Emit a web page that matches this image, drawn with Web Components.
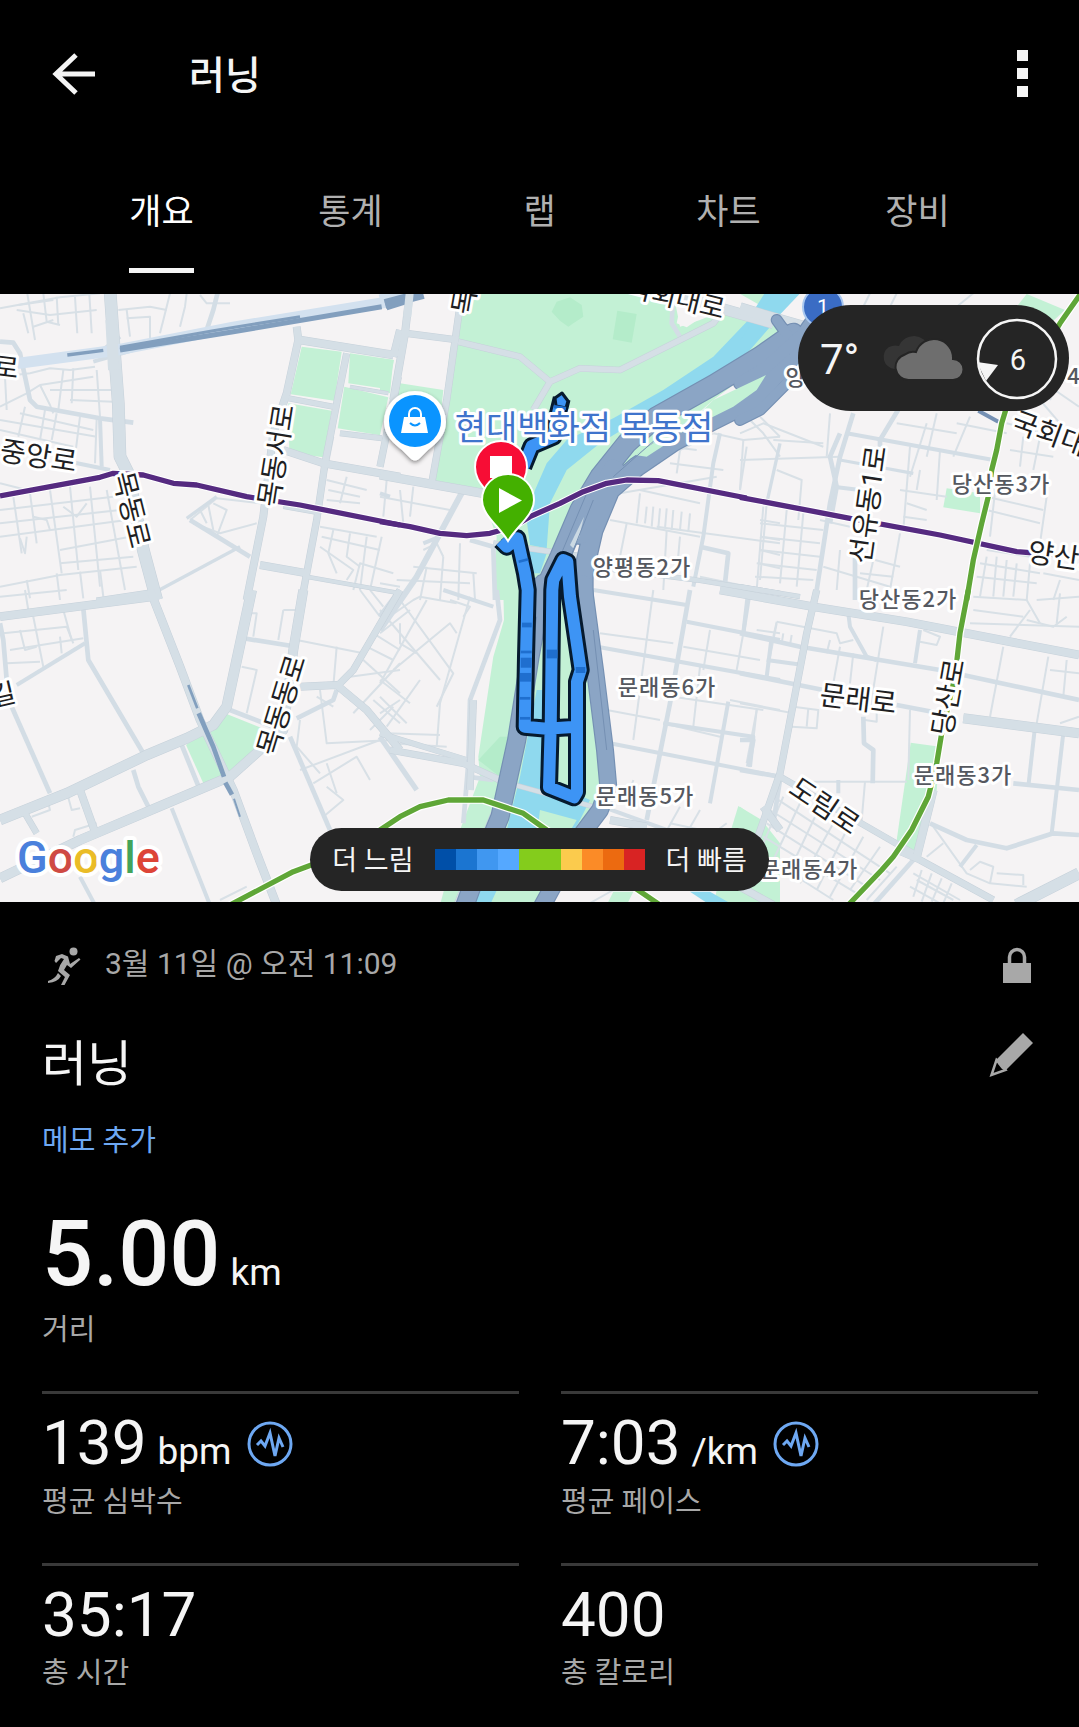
<!DOCTYPE html>
<html lang="ko">
<head>
<meta charset="utf-8">
<meta name="viewport" content="width=device-width, initial-scale=1">
<title>러닝</title>
<style>
  body { margin: 0; background: #000; color: #f5f5f5; font-family: Roboto, "Noto Sans CJK KR", sans-serif; }
</style>
</head>
<body>
<activity-page>
  <app-bar heading="러닝"></app-bar>
  <tab-strip labels="개요,통계,랩,차트,장비"></tab-strip>
  <route-map>
    <weather-pill slot="weather"></weather-pill>
    <pace-legend slot="legend"></pace-legend>
  </route-map>
  <activity-summary></activity-summary>
  <stat-grid>
    <stat-card value="139" unit="bpm" label="평균 심박수" zone></stat-card>
    <stat-card value="7:03" unit="/km" label="평균 페이스" zone></stat-card>
    <stat-card value="35:17" label="총 시간"></stat-card>
    <stat-card value="400" label="총 칼로리"></stat-card>
  </stat-grid>
</activity-page>

<script>
class Base extends HTMLElement {
  connectedCallback() {
    if (!this.shadowRoot) this.attachShadow({ mode: 'open' }).innerHTML = this.view();
  }
}

customElements.define('activity-page', class extends Base {
  view() { return `<style>:host{display:block;min-height:100vh;background:#000}main{display:flex;flex-direction:column}</style><main><slot></slot></main>`; }
});

customElements.define('app-bar', class extends Base {
  view() { return `<style>
    :host{display:block}
    header{display:flex;align-items:center;height:148px;padding:0 42px}
    button{display:flex;align-items:center;justify-content:center;width:64px;height:64px;margin:0;padding:0;border:0;background:none;color:inherit}
    h1{flex:1;margin:0 0 0 83px;padding-top:4px;font-size:39px;line-height:56px;font-weight:500}
    .more{width:30px}
  </style>
  <header>
    <button aria-label="뒤로"><svg width="64" height="64" viewBox="0 0 64 64" fill="none" stroke="#f5f5f5" stroke-width="5"><path d="M53 32H14M34 13 14 32 34 51"/></svg></button>
    <h1>${this.getAttribute('heading')}</h1>
    <button class="more" aria-label="더보기"><svg width="30" height="64" viewBox="0 0 30 64" fill="#f5f5f5"><path d="M10 8h11v11H10zM10 26h11v11H10zM10 44h11v11H10z"/></svg></button>
  </header>`; }
});

customElements.define('tab-strip', class extends Base {
  view() {
    const tabs = this.getAttribute('labels').split(',').map((t, i) => `<button role="tab" aria-selected="${i === 0}"><span>${t}</span></button>`).join('');
    return `<style>
    :host{display:block}
    nav{display:flex;height:146px;padding:0 67px;box-sizing:border-box}
    button{flex:1;display:flex;justify-content:center;align-items:flex-start;margin:0;padding:0;border:0;background:none;color:#b0b0b0;font:inherit;font-size:35px}
    span{display:flex;align-items:center;height:125px;box-sizing:border-box;border-bottom:5px solid transparent}
    [aria-selected=true]{color:#fff}
    [aria-selected=true] span{border-color:#f5f5f5}
  </style><nav role="tablist">${tabs}</nav>`;
  }
});

/* Map geometry: six tiles at 3 units per pixel. Each row is: tile, stroke width, points. */
const TILES = { A: [0, 290], B: [380, 290], C: [740, 290], D: [0, 590], E: [380, 590], F: [740, 590] };
const place = (t, p) => p.trim().split(/\s+/).map(q => {
  const [x, y] = q.split(',').map(Number);
  return `${(TILES[t][0] + x / 3).toFixed(1)},${(TILES[t][1] + y / 3).toFixed(1)}`;
}).join(' ');
const rows = s => s.trim().split('\n').map(l => l.trim().match(/^(\S)\s+(\S+)\s+(.*)$/));
const lines = (color, s, cap = 'butt') => `<g fill="none" stroke="${color}" stroke-linejoin="round" stroke-linecap="${cap}">` +
  rows(s).map(([, t, w, p]) => `<polyline stroke-width="${(w / 3).toFixed(1)}" points="${place(t, p)}"/>`).join('') + '</g>';
const areas = s => rows(s).map(([, t, c, p]) => `<polygon fill="${c}" points="${place(t, p)}"/>`).join('');

const PARKS = `
A #c3f1d5 905,170 1025,185 1003,332 872,313
A #c3f1d5 1050,190 1182,210 1165,298 1045,280
A #c3f1d5 1033,290 1165,322 1140,436 1013,415
A #c3f1d5 865,340 995,362 970,502 868,488
D #c3f1d5 558,465 680,372 800,420 800,470 700,540 612,584
B #c3f1d5 0,205 40,210 30,310 0,300
B #c3f1d5 60,280 190,300 185,350 50,330
B #c3f1d5 250,10 880,10 900,110 960,90 1010,70 1200,110 1200,180 1000,330 760,540 600,700 520,800 500,930 340,930 350,740 300,600 165,580 210,180
B #b4ecca 515,65 530,35 570,22 605,45 610,80 580,100 565,110 540,92
B #b4ecca 712,62 770,72 755,158 698,148
B #c3f1d5 1060,0 1200,0 1200,80
E #c3f1d5 370,0 640,0 700,560 620,700 460,945 180,945 240,720 300,560 295,500 340,200 372,90
E #b4ecca 295,510 360,440 400,440 360,560
E #c3f1d5 1075,648 1145,690 1200,760 1200,945 1000,945 1050,730
E #c3f1d5 700,905 760,905 740,945 680,945
C #c3f1d5 860,12 975,60 920,110 830,50
C #c3f1d5 620,595 720,610 720,670 610,652
F #c3f1d5 512,458 600,470 590,600 520,790 470,750
F #c3f1d5 0,650 55,690 20,740 0,740
B #f5f3f4 900,50 975,60 960,85 920,112 890,100
`;
const WATER = `
B #8fd9ee 1160,0 1100,95 1000,200 850,300 700,385 560,450 500,520 465,600 440,690 450,765 500,775 510,640 560,540 660,460 840,350 1010,260 1110,180 1180,100 1200,50 1200,0
B #8fd9ee 440,780 500,790 480,850 440,850
E #8fd9ee 470,300 500,300 480,560 630,630 600,690 560,760 360,880 330,945 270,945 380,720 420,560
E #c3f1d5 480,660 590,690 560,740 470,740
E #8fd9ee 930,905 990,905 1060,945 990,945
C #8fd9ee 110,0 190,0 0,200 0,150
`;
const MINOR = `
A 6 80,0 95,90 105,150
A 6 0,55 180,22 300,10
A 6 55,45 160,30
A 6 130,10 140,95 180,105
A 6 170,20 175,105
A 6 225,20 232,130
A 6 268,10 275,130
A 6 50,60 150,75 290,60
A 6 100,110 160,90
A 6 70,70 85,130
A 6 355,60 450,50 500,60
A 6 380,85 450,80 450,150
A 6 510,10 480,130
A 6 560,10 555,50 540,110
A 6 600,15 620,40 690,40
A 6 380,60 390,140
A 6 0,260 90,250 150,235 210,240 285,230
A 6 0,350 80,310 120,285 280,260
A 6 120,285 150,345 160,370
A 6 190,240 175,360
A 6 290,240 300,380
A 6 220,235 215,340
A 6 150,300 340,300
A 6 210,330 340,335
A 6 15,260 20,360
A 6 60,370 280,420
A 6 0,390 290,440
A 6 75,350 55,440
A 6 135,360 120,450
A 6 170,370 155,450
A 6 240,380 225,500
A 6 290,385 285,520
A 6 0,420 220,470
A 6 0,580 80,600
A 6 40,620 65,790
A 6 90,610 110,760
A 6 150,600 185,850
A 6 210,590 235,840
A 6 270,590 300,890
A 6 320,600 375,900
A 6 0,660 340,620
A 6 0,700 360,660
A 6 0,740 380,690
A 6 180,780 390,740
A 6 180,820 400,800
A 6 60,745 75,790 80,740
A 6 100,680 140,690 150,720
A 6 190,650 230,680 260,640
A 6 0,890 180,855 410,830
A 6 80,870 90,925
A 6 170,850 180,930
A 6 240,845 250,925
A 6 300,840 310,920
A 6 640,640 680,660 650,740
A 6 600,660 620,700
A 6 625,645 640,720
A 6 570,690 650,625 780,640
A 6 580,700 660,730 770,700
A 6 1000,440 980,540
A 6 980,570 1100,600
A 6 985,600 1080,620
A 6 980,630 1080,640
A 6 1040,560 1020,640
A 6 960,710 1130,740
A 6 965,740 1140,780
A 6 1000,720 985,790 1010,850
A 6 1050,730 1040,800 1080,830
A 6 1100,740 1080,900
A 6 1145,740 1110,900
A 6 960,770 1060,840 1040,870
A 6 1060,900 1080,820 1180,850
B 6 0,620 210,660
B 6 20,570 10,680
B 6 70,700 60,600
B 6 100,590 90,680
B 6 130,780 170,760 190,800
B 6 100,830 290,850
B 6 50,870 270,880
B 6 140,830 120,930
B 6 190,800 180,930
B 6 240,760 235,930
B 6 280,850 285,930
B 6 0,880 60,890
B 6 780,460 950,480
B 6 1000,430 1090,450 1200,440
B 6 1100,380 1150,430 1200,500
B 6 1000,430 900,480 890,550
B 6 1090,450 1080,600
B 6 780,600 960,640
B 6 720,610 1010,560
B 6 870,520 1030,540
B 6 690,690 960,740
B 6 780,610 770,700
B 6 800,650 795,700
B 6 820,650 815,710
B 6 840,655 835,715
B 6 860,655 855,715
B 6 880,660 875,720
B 6 905,665 900,720
B 6 930,670 925,725
B 6 830,710 1200,760
B 6 740,700 720,800
B 6 860,720 850,900
B 6 1150,650 1130,900
B 6 1140,690 1200,700
B 6 1140,740 1200,750
B 6 1140,780 1200,795
B 6 1135,820 1200,835
B 6 960,860 1200,910
B 6 900,740 890,850
C 6 0,430 70,400 250,470
C 6 60,380 120,440
C 6 270,370 260,500
C 6 0,510 300,500
C 6 100,450 250,460
C 6 20,470 0,600
C 6 110,540 185,570 175,690
C 6 290,550 280,640
C 6 240,690 330,710
C 6 60,700 250,720
C 6 60,740 240,760
C 6 60,780 240,800
C 6 50,820 230,840
C 6 45,860 220,870
C 6 80,640 60,870
C 6 140,660 120,880
C 6 190,670 170,890
C 6 370,800 480,830
C 6 360,850 460,860
C 6 250,830 450,890
C 6 300,780 290,900
C 6 400,810 380,900
C 6 480,730 450,900
C 6 510,470 490,720
C 6 560,400 510,560
C 6 590,370 560,500
C 6 650,400 800,430
C 6 470,400 650,430
C 6 600,480 590,630
C 6 690,380 640,500
C 6 480,600 620,620
C 6 500,640 560,660
C 6 490,680 560,690
C 6 540,540 530,600
C 6 800,400 950,440
C 6 810,480 940,500
C 6 850,440 840,530
C 6 900,440 880,540
C 6 740,620 910,660
C 6 740,660 900,700
C 6 770,560 750,740
C 6 920,620 900,760
C 6 740,780 870,800
C 6 720,820 900,850
C 6 710,860 890,880
C 6 740,800 720,920
C 6 770,800 760,920
C 6 800,810 790,920
C 6 830,820 820,920
C 6 870,820 860,930
C 6 910,850 1017,870
C 6 960,870 940,930
C 6 930,290 1017,350
C 6 900,330 960,400
C 6 980,210 930,330
C 6 390,10 370,50
C 6 470,10 450,50
C 6 700,10 650,50
D 6 0,20 200,0
D 6 75,0 85,60
D 6 10,130 200,110 220,160
D 6 100,80 130,230
D 6 190,60 215,150
D 6 30,180 250,145
D 6 20,220 120,215
D 6 60,120 75,180 110,170
D 6 180,140 185,190
D 6 200,605 215,660 240,655
D 6 95,680 150,660 140,620
D 6 220,740 225,720 290,700
D 6 750,70 770,70 760,140
D 6 850,60 890,60
D 6 850,60 835,150
D 6 725,230 770,240 740,370
D 6 890,150 1090,190
D 6 1010,170 1000,290
D 6 1080,0 1140,80
D 6 1110,0 1150,50
D 6 1120,130 1200,180
D 6 1100,170 1180,210
D 6 1090,210 1200,310
D 6 1050,260 1200,240
D 6 1200,220 1060,370
D 6 1180,350 1110,420
D 6 1120,330 1200,400
D 6 960,300 980,460 1180,450
D 6 950,320 1000,350
D 6 900,390 890,470 960,550
D 6 900,540 1140,450
D 6 940,580 1070,500 1110,570
D 6 980,590 1030,630 970,680
D 6 980,520 1010,610
D 6 660,930 740,890
E 6 0,100 100,30 120,20 230,40
E 6 60,30 220,250 170,350
E 6 210,30 270,50 250,80
E 6 0,130 90,60
E 6 0,60 180,270
E 6 40,240 210,100 230,130
E 6 110,190 60,160 60,100
E 6 140,30 0,280
E 6 270,20 180,340 170,470
E 6 0,270 90,340
E 6 0,320 80,400
E 6 20,430 180,435
E 6 30,460 200,470
E 6 0,370 60,330
E 6 120,270 20,410
E 6 820,0 760,450
E 6 660,130 880,160
E 6 990,120 970,240
E 6 1090,130 1070,240
E 6 910,170 1140,210
E 6 1190,100 1160,250
E 6 680,360 840,390
E 6 960,230 940,410
E 6 880,320 1150,360
E 6 850,400 1020,440
E 6 1130,360 1100,520
E 6 1050,330 1200,360
E 6 900,650 850,740
E 6 960,660 920,730
E 6 1040,700 960,760
E 6 870,700 1060,740
E 6 620,945 700,900
E 6 760,570 740,640
E 6 1130,120 1200,130
F 6 110,95 290,130 300,160 340,150
F 6 110,95 100,140
F 6 130,130 125,160
F 6 155,135 150,165
F 6 270,150 260,190
F 6 300,170 280,280
F 6 430,110 390,360
F 6 550,120 600,140 590,165 540,155
F 6 340,190 330,280
F 6 160,350 235,360 230,415 155,410
F 6 205,355 200,410
F 6 375,390 410,395 410,350
F 6 510,360 505,570
F 6 0,340 160,370
F 6 50,360 40,450
F 6 790,170 750,380
F 6 925,200 890,400
F 6 930,240 1017,250
F 6 980,210 970,320
F 6 700,20 860,30 900,100
F 6 700,60 850,80
F 6 870,60 810,140
F 6 690,100 1017,110
F 6 890,30 1017,20
F 6 960,10 950,100
F 6 860,90 940,110 980,80
F 6 960,400 1017,380
F 6 220,575 500,575
F 6 375,575 365,690
F 6 130,620 70,760
F 6 180,640 100,810
F 6 230,670 140,860
F 6 280,700 180,880
F 6 320,720 230,900
F 6 370,740 270,920
F 6 420,770 330,900
F 6 100,620 450,850
F 6 90,660 420,870
F 6 80,700 380,890
F 6 70,740 350,910
F 6 60,790 280,930
F 6 470,830 380,930
F 6 580,710 680,850 750,880 860,890
F 6 610,760 560,800
F 6 690,840 720,815 760,830 750,880
F 6 770,850 850,855 850,885
F 6 520,850 660,930
F 6 545,840 520,920
F 6 575,850 545,935
F 6 605,865 575,935
F 6 635,880 610,940
F 6 530,870 640,930
F 6 510,890 600,940
`;
const MID = `
A 14 0,155 40,158 60,190 90,330 110,350 300,385 400,398
A 12 300,385 305,530
A 12 210,515 330,540
A 14 655,0 640,60 620,120
A 10 440,920 720,770
A 14 570,690 750,800
A 10 560,685 650,620
A 12 295,190 360,140
A 12 280,215 400,180
B 12 0,610 30,620
B 18 250,600 110,860 0,1020
B 14 270,750 340,770 345,930
B 12 130,760 180,740
B 12 1020,430 1000,520 970,740 940,890
B 14 960,770 1045,790 1035,880
B 14 880,0 875,100 900,140
C 14 300,430 270,500 290,590 270,700
C 14 340,370 300,500 270,640 230,900
C 14 480,350 420,450 420,520
C 12 320,430 760,510
C 10 300,510 520,550
C 10 120,460 80,640
C 12 280,590 360,600
C 14 345,800 345,930
D 14 0,100 10,150 20,270
D 14 35,350 150,610
D 14 250,55 265,210 430,490
D 12 255,160 50,285
D 14 400,540 415,590 450,660
D 14 545,465 600,600
D 12 515,655 630,945
D 12 240,860 285,945
D 14 870,440 990,720
D 14 890,385 1000,330 1010,300
D 14 730,145 890,170
D 14 870,390 820,410 690,360
E 16 60,0 0,80
E 14 350,0 360,90 270,330 265,520 250,700
E 16 0,440 110,600
E 12 190,0 340,50
E 12 660,172 1200,270
E 12 690,460 1200,560
E 14 930,0 870,340 800,690
E 12 1110,0 1090,130
E 12 920,95 1200,150
E 12 1045,335 990,640
E 14 1200,570 1180,700
E 12 640,640 860,720
E 12 640,0 920,45
E 12 850,400 1120,440 1110,530
E 14 340,570 260,560
F 12 25,0 10,130
F 12 95,140 80,260
F 12 80,210 190,225
F 14 0,130 180,170 600,240 1017,330
F 14 0,250 250,300
F 14 470,345 600,370
F 12 540,120 525,220
F 12 325,70 330,110 380,200 410,210
F 14 0,540 120,560
F 14 0,450 40,450 25,530
F 14 370,380 372,460 400,480 398,580
F 12 295,570 295,610
F 12 885,410 865,590
F 12 970,430 935,730
F 14 820,580 1017,600
F 14 570,700 680,750 800,775 940,730 1017,735
F 12 710,765 660,830
F 14 520,810 400,945
`;
const MAJOR = `
A 38 330,0 340,140 355,340 360,500 385,550 430,780 470,930
A 24 890,110 895,150 860,310 820,430 790,680 740,930
A 26 900,150 1180,195
A 24 1180,200 1200,120
A 22 1040,190 1010,340 975,520 950,690 905,930
A 18 865,325 1000,350
A 18 1020,430 1145,445
A 24 850,480 970,520 1200,560
A 22 1195,260 1140,530
A 12 1050,290 1165,310
A 24 780,825 920,850
A 14 920,860 1200,910
A 14 850,650 960,670
A 26 290,935 460,910
B 24 90,0 75,130 40,330
B 22 245,10 200,330 155,580
B 22 80,130 235,150
B 20 0,190 60,190
B 20 235,155 420,200 510,275
B 20 460,360 510,275 600,235 720,240 900,150 1000,100 1030,60
B 28 0,555 310,610
B 18 340,760 620,800
B 16 1200,910 950,870 630,830
B 34 900,20 1180,100
C 36 0,55 100,85 190,110
C 16 0,890 180,920
D 26 0,80 460,20
D 26 450,0 540,230 600,390 700,600 770,790 830,945
D 32 0,690 200,610 440,495 560,445 640,405 680,350 755,0
D 30 0,865 240,750 500,640 690,560 780,480 850,420 880,180 910,0
D 24 900,290 1010,285 1100,360 1200,480
D 22 1010,290 1060,240 1200,0
D 24 240,600 290,740
D 20 75,670 110,730
E 22 30,480 250,520 360,570
E 18 0,430 260,510
E 16 350,570 640,650
E 20 370,600 230,945
E 24 690,690 800,710
E 24 1150,650 1200,720
E 22 280,330 270,600
F 26 -60,0 220,50 500,95 1017,195
F 22 230,0 200,130 120,550 40,780
F 30 670,385 1017,430
F 20 120,560 520,790
F 26 580,600 530,800
F 22 470,780 540,810 760,930
F 36 830,945 1017,850
F 24 0,890 100,945
`;
const HIGHWAY = `
B 64 1240,130 1140,200 1000,285 830,380 740,460 660,560 600,660 540,800 480,930
B 30 1220,120 1205,110
B 62 1260,190 1180,260 1120,330 1000,390 880,455 770,530 690,600 640,720 610,850 610,930
B 70 700,540 640,680 600,730
E 58 490,-20 450,200 410,450 360,680 290,850 250,960
E 54 610,-20 645,240 675,480 685,590 660,660 600,740 480,960
C 36 110,90 160,160 170,250 60,360 0,390
C 42 280,0 190,130 80,230 0,280
`;

customElements.define('route-map', class extends Base {
  view() {
    const label = (x, y, r, s, t, c = '#1f1f23', extra = '') => `<text transform="translate(${x} ${y}) rotate(${r})" text-anchor="middle" font-size="${s}" fill="${c}" ${extra}>${t}</text>`;
    const gray = (x, y, t) => label(x, y, 0, 22, t, '#55585f', 'class="area"');
    const loop = `M${place('B', '362,752')} ${place('B', '380,770')} ${place('B', '412,745')} ${place('B', '435,850')} ${place('E', '443,0')} ${place('E', '438,200')} ${place('E', '434,410')} ${place('E', '500,416')} ${place('E', '588,410')}
      M${place('E', '512,410')} ${place('E', '507,592')} ${place('E', '582,622')} ${place('E', '591,606')} ${place('E', '591,275')} ${place('E', '602,240')} ${place('E', '570,20')} ${place('B', '562,815')} ${place('B', '550,810')} ${place('B', '520,870')} ${place('E', '517,0')} ${place('E', '512,420')}
      M${place('B', '545,325')} ${place('B', '534,370')} ${place('B', '520,440')} ${place('B', '455,468')} ${place('B', '430,530')}`;
    return `<style>
    :host{display:block;position:relative;overflow:hidden;background:#f5f3f4}
    .map{display:block;width:100%;height:auto;font-family:Roboto,"Noto Sans CJK KR",sans-serif}
    text{paint-order:stroke;stroke:#fff;stroke-width:6px;stroke-linejoin:round;font-weight:400}
    .area{font-family:"Noto Sans CJK KR",sans-serif;font-weight:500;letter-spacing:1px}
    slot[name=weather]{display:block;position:absolute;top:11px;right:10px}
    slot[name=legend]{display:flex;justify-content:center;position:absolute;left:0;right:0;bottom:11px}
  </style>
  <svg class="map" viewBox="0 294 1079 608" role="img" aria-label="경로 지도">
    <rect y="294" width="1079" height="608" fill="#f5f3f4"/>
    ${areas(PARKS)}${areas(WATER)}
    ${lines('#d8e0e6', MINOR)}
    ${lines('#d3dde5', MID)}
    ${lines('#c6d1da', MAJOR)}
    ${lines('#d5dfe6', MAJOR.replace(/^(\S) (\d+)/gm, (m, t, w) => t + ' ' + (w - 3)))}
    ${lines('#d3e1ef', `
A 34 40,222 340,182 700,112 1200,30
B 34 0,30 110,5`)}
    ${lines('#829fbe', `
A 10 202,195 310,181
A 15 360,180 700,125 1145,50
A 9 360,172 640,122 900,80
A 26 1158,48 1215,30
B 30 15,42 130,12
D 8 565,285 592,355
D 14 596,370 640,470 672,560
D 14 676,578 696,614
D 6 702,626 720,680`)}
    ${lines('#d5dfe6', `
A 34 333,90 341,240
B 24 90,0 82,80`)}
    ${lines('#7590b3', HIGHWAY, 'round')}
    ${lines('#8ba5c5', HIGHWAY.replace(/^(\S) (\d+)/gm, (m, t, w) => t + ' ' + (w - 7)), 'round')}
    ${areas(`
B #c3f1d5 1000,330 1158,255 1130,300 1060,350 900,430
B #c3f1d5 765,495 850,440 900,435 800,500
B #cbd9e3 612,680 598,740 580,775 570,765`)}
    ${lines('#7590b3', `
B 3 640,630 560,830
B 3 620,610 540,800
B 3 870,410 700,560
E 3 470,80 420,420
E 3 640,120 680,480
C 12 715,362 775,395`)}
    ${lines('#fff', `
A 22 0,618 300,562 340,550 430,555 520,580 590,585 740,620 900,645 1200,705
B 22 0,695 90,710 180,730 260,737 330,730 400,710 450,680 540,640 610,605 680,580 740,570 835,572 1100,624
C 22 0,622 330,685 600,735 830,785 900,788`)}
    ${lines('#552a80', `
A 16 0,618 300,562 340,550 430,555 520,580 590,585 740,620 900,645 1200,705
B 16 0,695 90,710 180,730 260,737 330,730 400,710 450,680 540,640 610,605 680,580 740,570 835,572 1100,624
C 16 0,622 330,685 600,735 830,785 960,795`)}
    ${['#fff 23', '#5fa637 16'].map(s => { const [c, w] = s.split(' '); return lines(c, `
C ${w} 1030,0 960,100 900,200 800,350 785,400 770,480 755,540 745,620 725,700 700,810 680,930
F ${w} 685,0 660,130 645,260 605,430 590,520 565,620 515,720 460,800 425,840 325,945
D ${w} 690,945 880,845 1000,800 1140,720
E ${w} 0,720 60,680 120,650 205,630 310,630 430,670 500,720 700,850 840,945`); }).join('')}
    <g>
      ${label(474, 303, -80, 28, '목')}${label(674, 307, 14, 27, '국회대로')}
      ${label(5, 377, 7, 27, '로')}${label(37, 466, 9, 28, '중앙로')}
      ${label(122, 512, 76, 28, '목동로')}${label(286, 457, -81, 28, '목동서로')}
      ${label(291, 708, -73, 28, '목동동로')}${label(5, 704, -13, 27, '길')}
      ${label(878, 506, -82, 28, '선유동1로')}${label(857, 709, 7, 28, '문래로')}
      ${label(958, 699, -80, 28, '당산로')}${label(819, 814, 34, 28, '도림로')}
      ${label(1058, 447, 20, 28, '국회대로')}${label(1065, 567, 8, 28, '양산로')}
      ${gray(642, 575, '양평동2가')}${gray(1001, 492, '당산동3가')}${gray(908, 607, '당산동2가')}
      ${gray(667, 695, '문래동6가')}${gray(963, 783, '문래동3가')}${gray(645, 804, '문래동5가')}
      ${gray(809, 877, '문래동4가')}${gray(796, 385, '양')}${gray(1074, 384, '4')}
    </g>
    <circle cx="823" cy="307" r="20" fill="#3a6cc4" stroke="#a9c8f0" stroke-width="2"/>
    <text x="823" y="314" text-anchor="middle" font-size="21" fill="#fff" style="stroke:none">1</text>
    <path d="${loop}" fill="none" stroke="#061a2e" stroke-width="18" stroke-linejoin="round"/>
    <path d="${loop}" fill="none" stroke="#3d94f5" stroke-width="12" stroke-linejoin="round"/>
    <path d="M556 406 555 398 562 393 568 401 566 408z" fill="#3d94f5" stroke="#061a2e" stroke-width="3" stroke-linejoin="round"/>
    ${lines('#1f6fcf', `
E 14 426,105 455,105
E 8 422,186 455,186
E 30 422,218 455,218
E 26 420,262 453,262
E 8 418,325 451,325
E 26 500,192 532,192
E 8 420,385 450,385
E 18 587,240 616,240
B 8 416,815 445,808
B 10 522,350 558,355`)}
    ${label(584, 440, 0, 34, '현대백화점 목동점', '#3f74cc')}
    <filter id="sh" x="-30%" y="-30%" width="160%" height="160%"><feDropShadow dx="0" dy="2" stdDeviation="2" flood-opacity=".45"/></filter>
    <path filter="url(#sh)" d="M415 391a31 31 0 0 0-31 31c0 13 9 21 18 28l8 8q5 5 10 0l8-8c9-7 18-15 18-28a31 31 0 0 0-31-31z" fill="#fff"/>
    <circle cx="415" cy="421" r="26" fill="#0a94ff"/>
    <path d="M404 417h21l3 16h-27z" fill="#fff"/><path d="M409 418v-4a6 6 0 0 1 12 0v4" fill="none" stroke="#fff" stroke-width="2"/><path d="M410 423q5 5 10 0" fill="none" stroke="#0a94ff" stroke-width="2"/>
    <path d="M501 441a26 26 0 0 0-26 26c0 10 5 16 9 21h34c4-5 9-11 9-21a26 26 0 0 0-26-26z" fill="#f70d35" stroke="#fff" stroke-width="2"/><path d="M490 456h22v22h-22z" fill="#fff"/>
    <path d="M508 474a26 26 0 0 0-26 26c0 15 17 26 26 41 9-15 26-26 26-41a26 26 0 0 0-26-26z" fill="#44b000" stroke="#fff" stroke-width="2"/><path d="M499 488 522 500.500 499 513z" fill="#fff"/>
    <text x="17" y="873" font-size="45" style="font-weight:500;stroke-width:8px"><tspan fill="#4a80dc">G</tspan><tspan fill="#cf4a43">o</tspan><tspan fill="#eabc27">o</tspan><tspan fill="#4a80dc">g</tspan><tspan fill="#43a45a">l</tspan><tspan fill="#dd4437">e</tspan></text>
  </svg>
  <slot name="weather"></slot><slot name="legend"></slot>`;
  }
});

customElements.define('weather-pill', class extends Base {
  view() { return `<style>
    :host{display:flex;align-items:center;height:106px;padding:0 10px 0 22px;border-radius:53px;background:#252525}
    .temp{width:61px;padding-top:3px;font-size:42px;line-height:48px}
    .wind{display:flex;position:relative;width:84px;height:84px;margin-left:10px;align-items:center;justify-content:center;font-size:29px;line-height:32px}
    .wind svg{position:absolute;inset:0}
    .wind span{padding:3px 0 0 2px}
  </style>
  <span class="temp">7°</span>
  <svg width="84" height="46" viewBox="0 0 84 46"><path d="M14 34A12 12 0 0 1 8 12 14 14 0 0 1 18 11 16 16 0 0 1 48 12V34z" fill="#353535"/><path d="M28 45A13 13 0 0 1 24 19.500 13 13 0 0 1 35 17 19 19 0 0 1 72 24 10.500 10.500 0 0 1 72 45z" fill="#6e6e6e" stroke="#252525" stroke-width="2"/></svg>
  <span class="wind"><svg width="84" height="84" viewBox="0 0 84 84"><circle cx="42" cy="43" r="39" fill="none" stroke="#f5f5f5" stroke-width="2.500"/><path d="M2 46 23 49 11 65z" fill="#f5f5f5"/></svg><span>6</span></span>`; }
});

customElements.define('pace-legend', class extends Base {
  view() {
    const c = ['#004fa8', '#1b75d1', '#4097f0', '#55a8ff', '#84cc1c', '#84cc1c', '#fbcb4d', '#fb8b27', '#ec6a10', '#d82323'];
    return `<style>
    :host{display:flex;align-items:center;gap:21px;height:63px;padding:0 22px;border-radius:32px;background:#252525;font-size:27px;line-height:40px;white-space:nowrap}
    div{display:flex}i{width:21px;height:21px}span{padding-top:2px}
  </style><span>더 느림</span><div>${c.map(x => `<i style="background:${x}"></i>`).join('')}</div><span>더 빠름</span>`;
  }
});

customElements.define('activity-summary', class extends Base {
  view() { return `<style>
    :host{display:block;padding:39px 42px 0}
    .row{display:flex;align-items:center;justify-content:space-between}
    .meta{height:48px;color:#a8a8a8;font-size:30px}
    .date{display:flex;align-items:center;gap:23px;line-height:40px}
    .date span{padding-bottom:2px}
    .title{margin-top:41px;height:64px;align-items:flex-start}
    h2{margin:0;padding-top:3px;font-size:49px;line-height:64px;font-weight:400}
    button{display:flex;width:48px;height:48px;margin:0;padding:0;border:0;background:none}
    .lock{margin-right:4px}
    a{display:block;width:max-content;margin-top:27px;font-size:29px;line-height:40px;color:#6ea8f2;text-decoration:none}
    .big{display:flex;align-items:baseline;gap:10px;margin-top:54px;font-size:90px;line-height:80px;font-weight:500}
    small{font-size:37px;line-height:40px;font-weight:400}
    .label{margin-top:15px;font-size:29px;line-height:40px;color:#a8a8a8}
  </style>
  <div class="row meta">
    <span class="date"><svg width="40" height="40" viewBox="0 0 40 40" fill="#a8a8a8"><circle cx="31.500" cy="6.500" r="4"/><path d="M14 11 20 9 26 11.500 28 19 37 13 38.500 14.500 29 23 25 20 22 25 28 30 22 41 19 40 23 32 16 26Q18 19 22 14L19 13 14 18 12.500 16zM16 28 19 31Q16 37 6 38L6 36Q13 34 16 28z"/></svg><span>3월 11일 @ 오전 11:09</span></span>
    <svg class="lock" width="32" height="40" viewBox="0 0 32 40"><path d="M2 18h28v20H2z" fill="#a8a8a8"/><path d="M8.500 18V12a7.500 7.500 0 0 1 15 0V18" fill="none" stroke="#a8a8a8" stroke-width="3.500"/></svg>
  </div>
  <div class="row title"><h2>러닝</h2><button aria-label="편집"><svg width="48" height="48" viewBox="0 0 48 48"><path d="M34 3 44 13 17 40 7 30z" fill="#a8a8a8"/><path d="M7.500 30 2.500 45 16.500 40z" fill="#000" stroke="#a8a8a8" stroke-width="2.500"/><path d="M7 30 17 40l-4-1-4-5z" fill="#a8a8a8"/></svg></button></div>
  <a href="#">메모 추가</a>
  <div class="big">5.00<small>km</small></div>
  <div class="label">거리</div>`; }
});

customElements.define('stat-grid', class extends Base {
  view() { return `<style>:host{display:grid;grid-template-columns:1fr 1fr;gap:41px 42px;padding:41px 41px 0 42px}</style><slot></slot>`; }
});

customElements.define('stat-card', class extends Base {
  view() {
    const u = this.getAttribute('unit');
    return `<style>
    :host{display:block;border-top:3px solid #393939;padding-top:21px}
    .row{display:flex;align-items:center;gap:15px}
    .value{display:flex;align-items:baseline;gap:11px;font-size:62px;line-height:56px}
    small{font-size:37px;line-height:40px}
    .label{margin-top:10px;font-size:29px;line-height:40px;color:#a8a8a8}
  </style>
  <div class="row"><span class="value">${this.getAttribute('value')}${u ? `<small>${u}</small>` : ''}</span>
  ${this.hasAttribute('zone') ? '<svg width="46" height="46" viewBox="0 0 46 46" fill="none" stroke="#6ea8f2" stroke-width="3"><circle cx="23" cy="23" r="21"/><path d="M10 24 14 20 18 25 23 12 28 35 32 17 36 26" stroke-width="3"/></svg>' : ''}</div>
  <div class="label">${this.getAttribute('label')}</div>`;
  }
});
</script>
</body>
</html>
